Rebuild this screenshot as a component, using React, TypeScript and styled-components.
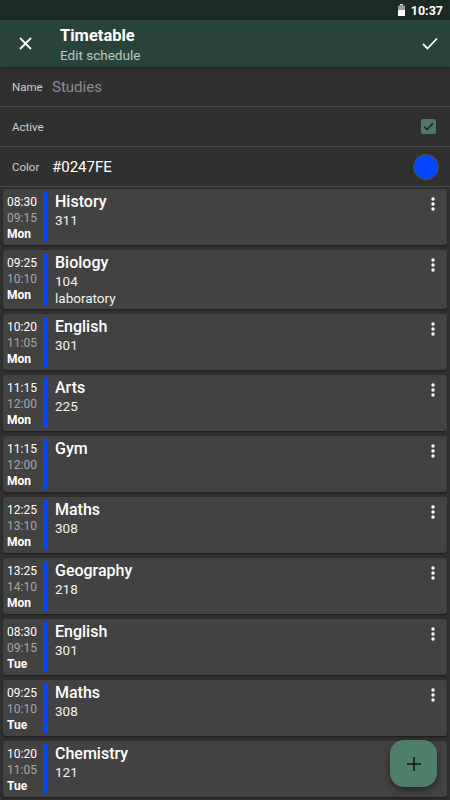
import React from "react";
import styled, { createGlobalStyle } from "styled-components";

const GlobalStyle = createGlobalStyle`
  html, body {
    margin: 0;
    padding: 0;
    background: #303030;
    font-family: Roboto, "Noto Sans", Arial, sans-serif;
    overflow: hidden;
  }
  * { box-sizing: border-box; }
`;

type Lesson = {
	start: string;
	end: string;
	day: string;
	title: string;
	room?: string;
	note?: string;
};

const lessons: Lesson[] = [
	{ start: "08:30", end: "09:15", day: "Mon", title: "History", room: "311" },
	{ start: "09:25", end: "10:10", day: "Mon", title: "Biology", room: "104", note: "laboratory" },
	{ start: "10:20", end: "11:05", day: "Mon", title: "English", room: "301" },
	{ start: "11:15", end: "12:00", day: "Mon", title: "Arts", room: "225" },
	{ start: "11:15", end: "12:00", day: "Mon", title: "Gym" },
	{ start: "12:25", end: "13:10", day: "Mon", title: "Maths", room: "308" },
	{ start: "13:25", end: "14:10", day: "Mon", title: "Geography", room: "218" },
	{ start: "08:30", end: "09:15", day: "Tue", title: "English", room: "301" },
	{ start: "09:25", end: "10:10", day: "Tue", title: "Maths", room: "308" },
	{ start: "10:20", end: "11:05", day: "Tue", title: "Chemistry", room: "121" },
];

const Screen = styled.div`
  width: 450px;
  height: 800px;
  position: relative;
  overflow: hidden;
  background: #303030;
`;

const StatusBar = styled.div`
  height: 20px;
  background: #1b2a22;
  display: flex;
  align-items: center;
  justify-content: flex-end;
  gap: 6px;
  padding-right: 7px;
  color: #fff;
  font-size: 12.5px;
  font-weight: 700;
`;

const AppBar = styled.div`
  height: 47px;
  background: #28433a;
  display: flex;
  align-items: center;
  padding: 0 12px 0 17px;
  box-shadow: 0 1px 3px rgba(0, 0, 0, 0.4);
  position: relative;
  z-index: 1;
`;

const TitleBlock = styled.div`
  flex: 1;
  display: flex;
  flex-direction: column;
  margin-left: 27px;
  padding-top: 3px;
`;

const Title = styled.div`
  color: #fff;
  font-size: 16.5px;
  font-weight: 700;
  line-height: 20px;
`;

const Subtitle = styled.div`
  color: #b9cbc1;
  font-size: 13.5px;
  line-height: 18px;
`;

const IconButton = styled.div`
  display: flex;
  align-items: center;
  justify-content: center;
  width: 16px;
  height: 16px;
`;

const FormRow = styled.div`
  height: 40px;
  display: flex;
  align-items: center;
  padding: 0 12px;
  border-bottom: 1px solid #484848;
`;

const Label = styled.span`
  color: #cfcfcf;
  font-size: 11.5px;
  width: 40px;
`;

const Value = styled.span<{ $muted?: boolean }>`
  flex: 1;
  color: ${(p) => (p.$muted ? "#8c8c8c" : "#ffffff")};
  font-size: 15px;
`;

const CheckBox = styled.div`
  width: 15px;
  height: 15px;
  border-radius: 2px;
  background: #4e7a65;
  display: flex;
  align-items: center;
  justify-content: center;
  margin-right: 2px;
`;

const ColorDot = styled.div<{ $color: string }>`
  width: 26px;
  height: 26px;
  border-radius: 50%;
  background: ${(p) => p.$color};
  border: 1px solid #5a5030;
  margin-right: -1px;
`;

const List = styled.div`
  display: flex;
  flex-direction: column;
  gap: 5px;
  padding: 2px 3px;
`;

const Card = styled.div`
  background: #424242;
  border-radius: 3px;
  box-shadow: 0 1px 2px rgba(0, 0, 0, 0.45);
  display: flex;
  min-height: 56px;
  padding: 3px 0;
  position: relative;
`;

const TimeCol = styled.div`
  width: 40px;
  padding: 2px 0 0 4px;
  display: flex;
  flex-direction: column;
  font-size: 12px;
  line-height: 16px;
`;

const Time = styled.span<{ $dim?: boolean }>`
  color: ${(p) => (p.$dim ? "#a8a8a8" : "#ffffff")};
`;

const Day = styled.span`
  color: #fff;
  font-weight: 700;
`;

const Bar = styled.div<{ $color: string }>`
  width: 5px;
  background: ${(p) => p.$color};
  align-self: stretch;
`;

const Content = styled.div`
  flex: 1;
  padding-left: 7px;
  display: flex;
  flex-direction: column;
`;

const LessonTitle = styled.span`
  color: #fff;
  font-size: 16px;
  font-weight: 500;
  line-height: 19px;
`;

const LessonLine = styled.span<{ $tight?: boolean }>`
  color: #f2f2f2;
  font-size: 13.5px;
  line-height: ${(p) => (p.$tight ? "16px" : "18px")};
`;

const Menu = styled.div`
  position: absolute;
  top: 7px;
  right: 11px;
`;

const Fab = styled.div`
  position: absolute;
  right: 13px;
  bottom: 13px;
  width: 47px;
  height: 47px;
  border-radius: 14px;
  background: #4f7f68;
  box-shadow: 0 3px 6px rgba(0, 0, 0, 0.45);
  display: flex;
  align-items: center;
  justify-content: center;
`;

const Dots = () => (
	<svg width="6" height="14" viewBox="0 0 6 14">
		<circle cx="3" cy="2" r="1.7" fill="#fff" />
		<circle cx="3" cy="7" r="1.7" fill="#fff" />
		<circle cx="3" cy="12" r="1.7" fill="#fff" />
	</svg>
);

const App = () => {
	return (
		<Screen>
			<GlobalStyle />
			<StatusBar>
				<svg width="7" height="12" viewBox="0 0 7 12">
					<rect x="2" y="0" width="3" height="1.5" fill="#d8d8d8" />
					<rect x="0" y="1.5" width="7" height="10.5" rx="0.5" fill="#9a9a9a" />
					<rect x="0" y="6" width="7" height="6" fill="#ffffff" />
				</svg>
				<span>10:37</span>
			</StatusBar>
			<AppBar>
				<IconButton>
					<svg width="13" height="13" viewBox="0 0 13 13">
						<path d="M1 1L12 12M12 1L1 12" stroke="#fff" strokeWidth="1.8" />
					</svg>
				</IconButton>
				<TitleBlock>
					<Title>Timetable</Title>
					<Subtitle>Edit schedule</Subtitle>
				</TitleBlock>
				<IconButton>
					<svg width="16" height="13" viewBox="0 0 16 13">
						<path d="M1 7L5.5 11.5L15 1.5" stroke="#fff" strokeWidth="1.8" fill="none" />
					</svg>
				</IconButton>
			</AppBar>
			<FormRow>
				<Label>Name</Label>
				<Value $muted>Studies</Value>
			</FormRow>
			<FormRow>
				<Label>Active</Label>
				<Value />
				<CheckBox>
					<svg width="11" height="9" viewBox="0 0 11 9">
						<path d="M1 4.5L4 7.5L10 1" stroke="#1f2a25" strokeWidth="1.6" fill="none" />
					</svg>
				</CheckBox>
			</FormRow>
			<FormRow>
				<Label>Color</Label>
				<Value>#0247FE</Value>
				<ColorDot $color="#0247fe" />
			</FormRow>
			<List>
				{lessons.map((l, i) => (
					<Card key={i}>
						<TimeCol>
							<Time>{l.start}</Time>
							<Time $dim>{l.end}</Time>
							<Day>{l.day}</Day>
						</TimeCol>
						<Bar $color="#0247fe" />
						<Content>
							<LessonTitle>{l.title}</LessonTitle>
							{l.room && <LessonLine>{l.room}</LessonLine>}
							{l.note && <LessonLine $tight>{l.note}</LessonLine>}
						</Content>
						<Menu>
							<Dots />
						</Menu>
					</Card>
				))}
			</List>
			<Fab>
				<svg width="14" height="14" viewBox="0 0 14 14">
					<path d="M7 0V14M0 7H14" stroke="#111" strokeWidth="1.5" />
				</svg>
			</Fab>
		</Screen>
	);
};

export default App;
